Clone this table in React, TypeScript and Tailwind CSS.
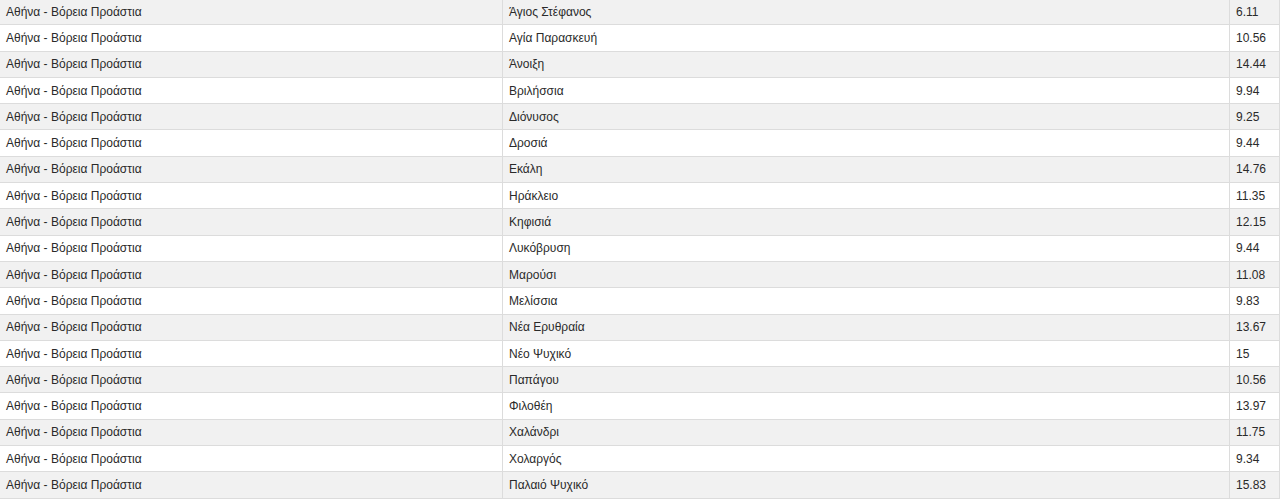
const region = "Αθήνα - Βόρεια Προάστια";

const rows: [string, string][] = [
  ["Άγιος Στέφανος", "6.11"],
  ["Αγία Παρασκευή", "10.56"],
  ["Άνοιξη", "14.44"],
  ["Βριλήσσια", "9.94"],
  ["Διόνυσος", "9.25"],
  ["Δροσιά", "9.44"],
  ["Εκάλη", "14.76"],
  ["Ηράκλειο", "11.35"],
  ["Κηφισιά", "12.15"],
  ["Λυκόβρυση", "9.44"],
  ["Μαρούσι", "11.08"],
  ["Μελίσσια", "9.83"],
  ["Νέα Ερυθραία", "13.67"],
  ["Νέο Ψυχικό", "15"],
  ["Παπάγου", "10.56"],
  ["Φιλοθέη", "13.97"],
  ["Χαλάνδρι", "11.75"],
  ["Χολαργός", "9.34"],
  ["Παλαιό Ψυχικό", "15.83"],
];

export default function App() {
  return (
    <div className="h-[499px] w-full overflow-hidden bg-white font-['Liberation_Sans',Arial,sans-serif] text-[12px] text-[#2a2a2a]">
      <div className="mt-[-1px] flex flex-col">
        {rows.map(([area, value], i) => (
          <div
            key={area}
            className={
              "grid h-[26.3px] grid-cols-[502px_727px_1fr] items-center border-b border-[#dcdcdc] " +
              (i % 2 === 0 ? "bg-[#f1f1f1]" : "bg-white")
            }
          >
            <div className="flex h-full items-center pl-[6px]">{region}</div>
            <div className="flex h-full items-center border-l border-[#dcdcdc] pl-[6px]">{area}</div>
            <div className="flex h-full items-center border-x border-[#dcdcdc] pl-[6px]">{value}</div>
          </div>
        ))}
      </div>
    </div>
  );
}
